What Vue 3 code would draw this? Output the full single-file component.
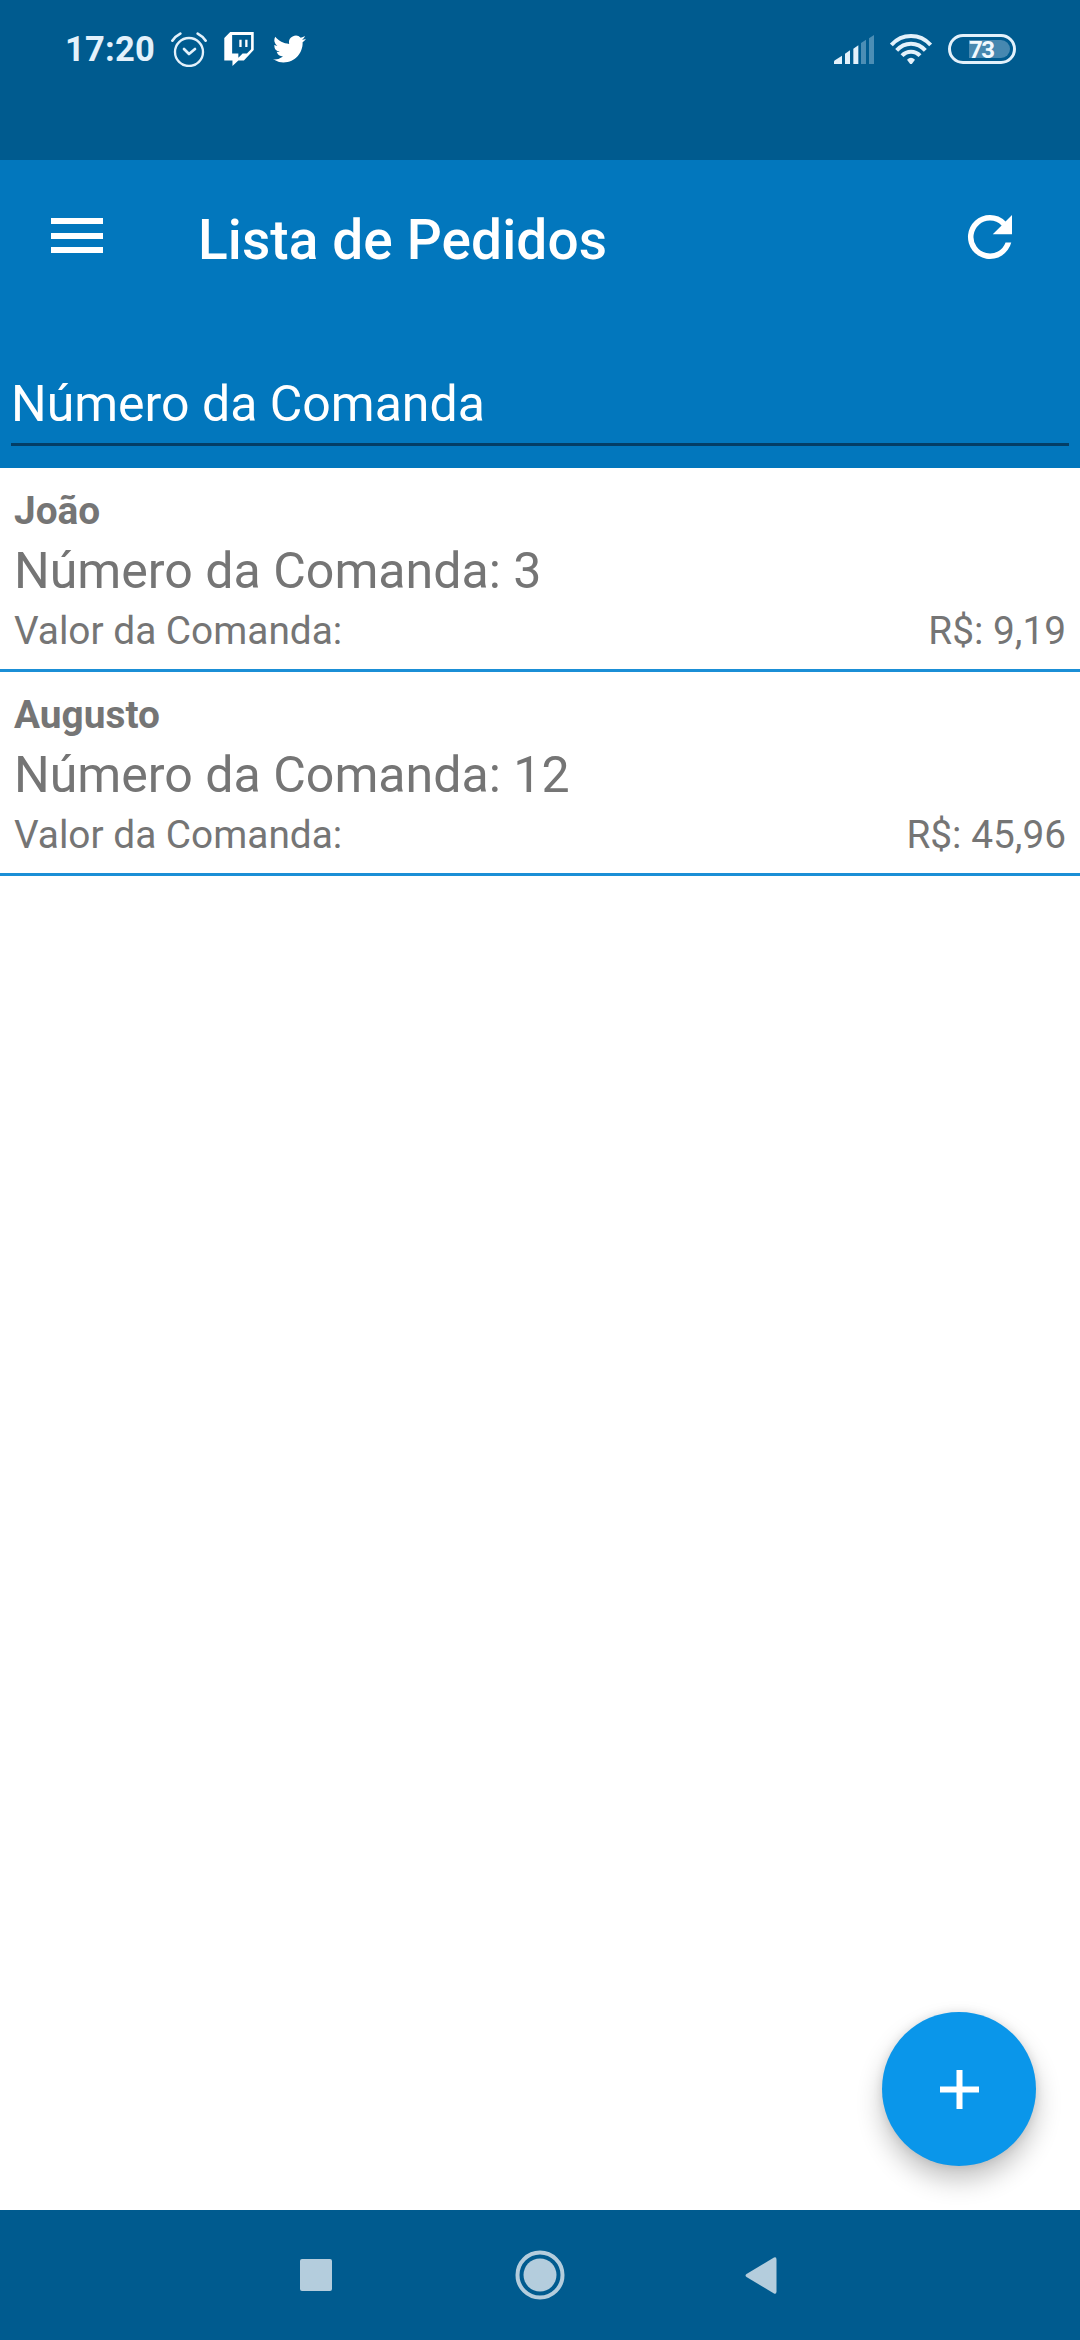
<script setup>
import { ref } from 'vue'

const hora = ref('17:20')
const bateria = ref(73)

const pedidos = ref([
  { id: 1, cliente: 'João', comanda: 3, valor: '9,19' },
  { id: 2, cliente: 'Augusto', comanda: 12, valor: '45,96' }
])
</script>

<template>
  <div class="screen">
    <div class="status-bar">
      <div class="status-left">
        <span class="clock">{{ hora }}</span>
        <svg class="alarm" viewBox="0 0 108 105">
          <g fill="none" stroke="#e3f1fb" stroke-linecap="round">
            <circle cx="54" cy="60" r="42" stroke-width="7" />
            <path d="M4 26Q13 13 28 5M104 26Q95 13 80 5" stroke-width="8" />
            <path d="M39 51L54 66L72 51" stroke-width="8" stroke-linejoin="round" />
          </g>
        </svg>
        <svg class="twitch" viewBox="0 0 90 104">
          <path fill="#fff" fill-rule="evenodd" d="M18 0H90V55L60 87H43L25 104V87H0V18ZM24 9V66H43V79L56 66H69L82 53V9ZM46 24H53V46H46ZM64 24H71V46H64Z" />
        </svg>
        <svg class="twitter" viewBox="0 2 24 20">
          <path fill="#fff" d="M23.95 4.57a10 10 0 0 1-2.82.77 4.96 4.96 0 0 0 2.16-2.72c-.95.55-2 .95-3.13 1.18a4.92 4.92 0 0 0-8.38 4.48C7.69 8.1 4.07 6.13 1.64 3.16a4.92 4.92 0 0 0 1.52 6.57 4.9 4.9 0 0 1-2.23-.61v.06a4.92 4.92 0 0 0 3.95 4.83 5 5 0 0 1-2.21.08 4.94 4.94 0 0 0 4.6 3.42A9.87 9.87 0 0 1 0 19.54a13.99 13.99 0 0 0 7.55 2.21c9.05 0 14-7.5 14-13.98 0-.21 0-.42-.02-.63a9.94 9.94 0 0 0 2.46-2.55z" />
        </svg>
      </div>
      <div class="status-right">
        <svg class="signal" viewBox="0 0 120 87">
          <path fill="#e3f1fb" d="M0 87V80Q0 77 4 75L24 62V87ZM33 87V56L48 46V87ZM58 87V41L73 31V87Z" />
          <path fill="#4c8eb5" d="M81 87V24L96 14V87ZM105 87V10L120 0V87Z" />
        </svg>
        <svg class="wifi" viewBox="0 0 126 90">
          <g fill="none" stroke="#e3f1fb" stroke-width="12">
            <path d="M4 33Q28 6 63 6Q98 6 122 33" />
            <path d="M20 49Q38 29 63 29Q88 29 106 49" />
            <path d="M36 65Q47 53 63 53Q79 53 90 65" />
          </g>
          <path fill="#e3f1fb" d="M51 77Q63 66 75 77L66 89Q63 92 60 89Z" />
        </svg>
        <div class="battery">
          <div class="battery-level">{{ bateria }}</div>
        </div>
      </div>
    </div>

    <header class="app-bar">
      <div class="toolbar">
        <div class="menu">
          <span></span>
          <span></span>
          <span></span>
        </div>
        <h1>Lista de Pedidos</h1>
        <svg class="refresh" viewBox="0 0 24 24">
          <path fill="#fff" d="M17.65 6.35A7.96 7.96 0 0 0 12 4a8 8 0 1 0 7.73 10h-2.08A6 6 0 1 1 12 6c1.66 0 3.14.69 4.22 1.78L13 11h7V4z" />
        </svg>
      </div>
      <div class="search">Número da Comanda</div>
    </header>

    <main class="list">
      <div v-for="pedido in pedidos" :key="pedido.id" class="item">
        <div class="name">{{ pedido.cliente }}</div>
        <div class="number">Número da Comanda: {{ pedido.comanda }}</div>
        <div class="value">
          <span>Valor da Comanda:</span>
          <span>R$: {{ pedido.valor }}</span>
        </div>
      </div>
      <button class="fab">
        <svg viewBox="0 0 39 39">
          <path d="M19.5 0V39M0 19.5H39" stroke="#fff" stroke-width="6" />
        </svg>
      </button>
    </main>

    <nav class="nav-bar">
      <svg class="nav-square" viewBox="0 0 32 32">
        <rect width="32" height="32" rx="2" fill="#b4cddd" />
      </svg>
      <svg class="nav-home" viewBox="0 0 50 50">
        <circle cx="25" cy="25" r="22.5" fill="none" stroke="#b4cddd" stroke-width="4" />
        <circle cx="25" cy="25" r="16.5" fill="#b4cddd" />
      </svg>
      <svg class="nav-back" viewBox="0 0 32 37">
        <path d="M29 0.5Q31.5 -0.5 31.5 2.5V34.5Q31.5 37.5 29 36.5L1.5 20Q-0.5 18.5 1.5 17Z" fill="#b4cddd" />
      </svg>
    </nav>
  </div>
</template>

<style>
body {
  margin: 0;
}
</style>

<style scoped>
.screen {
  display: flex;
  flex-direction: column;
  width: 1080px;
  height: 2340px;
  overflow: hidden;
  background: #fff;
  font-family: Roboto, sans-serif;
}

svg {
  display: block;
  flex: none;
}

.status-bar {
  display: flex;
  justify-content: space-between;
  box-sizing: border-box;
  height: 160px;
  padding: 30px 64px 0 65px;
  background: #005b8f;
}

.status-left,
.status-right {
  display: flex;
  align-items: center;
  height: 38px;
}

.clock {
  width: 106px;
  font-size: 34.5px;
  font-weight: 700;
  line-height: 38px;
  letter-spacing: 0.2px;
  color: #e3f1fb;
}

.alarm {
  width: 36px;
  height: 35px;
}

.twitch {
  width: 30px;
  height: 34px;
  margin-left: 17px;
}

.twitter {
  width: 33px;
  height: 28px;
  margin-left: 19px;
}

.signal {
  width: 40px;
  height: 29px;
}

.wifi {
  width: 42px;
  height: 30px;
  margin-left: 16px;
}

.battery {
  display: flex;
  justify-content: flex-end;
  align-items: center;
  box-sizing: border-box;
  width: 68px;
  height: 30px;
  margin-left: 16px;
  padding-right: 3px;
  border: 3px solid #e3f1fb;
  border-radius: 15px;
}

.battery-level {
  width: 41px;
  height: 18px;
  border-radius: 0 9px 9px 0;
  background: #4788b0;
  color: #f2f9fe;
  font-size: 24px;
  font-weight: 700;
  line-height: 20px;
  letter-spacing: -1.5px;
}

.app-bar {
  box-sizing: border-box;
  height: 308px;
  padding: 0 11px;
  background: #0277bd;
}

.toolbar {
  display: flex;
  align-items: center;
  height: 154px;
  padding: 0 46px 0 40px;
}

.menu {
  display: flex;
  flex-direction: column;
  justify-content: space-between;
  width: 52px;
  height: 35px;
  margin-bottom: 3px;
}

.menu span {
  height: 6px;
  background: #fff;
}

h1 {
  flex: 1;
  margin: 6px 0 0 95px;
  color: #fff;
  font-size: 55px;
  font-weight: 500;
  line-height: 64px;
  letter-spacing: 0.1px;
}

.refresh {
  width: 66px;
  height: 66px;
}

.search {
  box-sizing: border-box;
  height: 132px;
  padding-top: 61px;
  border-bottom: 3px solid #033e66;
  color: #fff;
  font-size: 50px;
  line-height: 58px;
}

.list {
  position: relative;
  flex: 1;
}

.item {
  box-sizing: border-box;
  height: 204px;
  padding: 17px 14px 0;
  border-bottom: 3px solid #1b8fd6;
  color: #757575;
  font-size: 38.8px;
  line-height: 52px;
}

.name {
  font-weight: 700;
}

.number {
  font-size: 50.1px;
  line-height: 68px;
}

.value {
  display: flex;
  justify-content: space-between;
}

/* botão flutuante de novo pedido */
.fab {
  position: absolute;
  right: 44px;
  bottom: 44px;
  display: flex;
  align-items: center;
  justify-content: center;
  width: 154px;
  height: 154px;
  padding: 0;
  border: none;
  border-radius: 50%;
  background: #0a96ea;
  box-shadow: 0 14px 26px rgba(0, 0, 0, 0.24), 0 0 10px rgba(0, 0, 0, 0.1);
}

.fab svg {
  width: 39px;
  height: 39px;
}

.nav-bar {
  z-index: 1;
  display: flex;
  align-items: center;
  box-sizing: border-box;
  height: 130px;
  padding-left: 300px;
  background: #005b8f;
}

.nav-square {
  width: 32px;
  height: 32px;
}

.nav-home {
  width: 50px;
  height: 50px;
  margin-left: 183px;
}

.nav-back {
  width: 32px;
  height: 37px;
  margin-left: 180px;
}
</style>
